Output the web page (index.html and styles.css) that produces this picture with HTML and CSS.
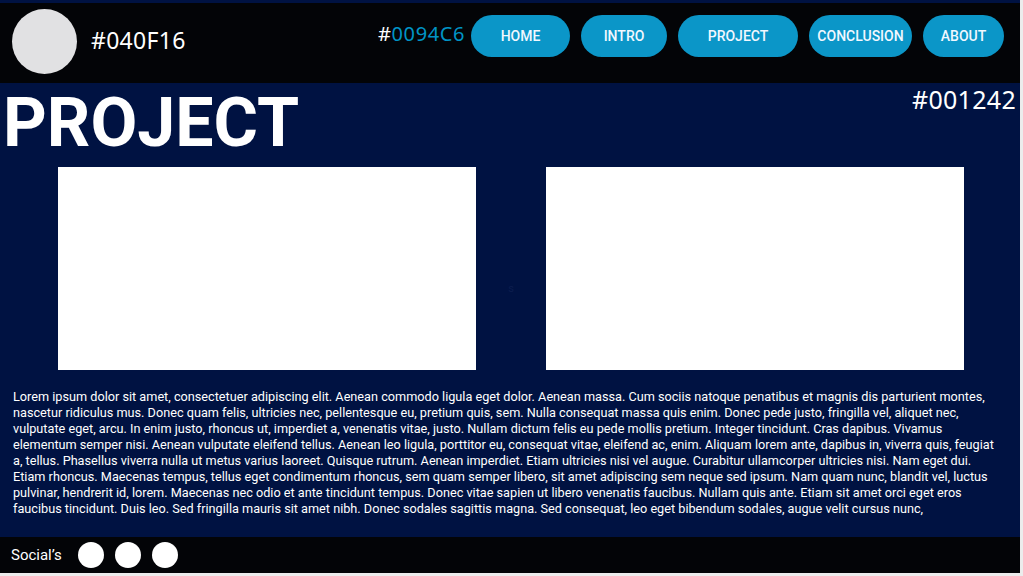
FILE: index.html
```html
<!DOCTYPE html>
<html lang="en">
<head>
<meta charset="utf-8">
<title>Project</title>
<link rel="stylesheet" href="styles.css">
</head>
<body>
<div class="page">
  <header class="header">
    <div class="logo"></div>
    <div class="brand-hex">#040F16</div>
    <div class="nav-hex"><span class="hash">#</span>0094C6</div>
    <nav class="nav">
      <a class="btn btn-home" href="#">HOME</a>
      <a class="btn btn-intro" href="#">INTRO</a>
      <a class="btn btn-project" href="#">PROJECT</a>
      <a class="btn btn-conclusion" href="#">CONCLUSION</a>
      <a class="btn btn-about" href="#">ABOUT</a>
    </nav>
  </header>
  <main class="main">
    <div class="title-row">
      <h1 class="title">PROJECT</h1>
      <div class="bg-hex">#001242</div>
    </div>
    <div class="media-row">
      <div class="media"></div>
      <span class="sep">s</span>
      <div class="media"></div>
    </div>
    <p class="text">Lorem ipsum dolor sit amet, consectetuer adipiscing elit. Aenean commodo ligula eget dolor. Aenean massa. Cum sociis natoque penatibus et magnis dis parturient montes,<br>
nascetur ridiculus mus. Donec quam felis, ultricies nec, pellentesque eu, pretium quis, sem. Nulla consequat massa quis enim. Donec pede justo, fringilla vel, aliquet nec,<br>
vulputate eget, arcu. In enim justo, rhoncus ut, imperdiet a, venenatis vitae, justo. Nullam dictum felis eu pede mollis pretium. Integer tincidunt. Cras dapibus. Vivamus<br>
elementum semper nisi. Aenean vulputate eleifend tellus. Aenean leo ligula, porttitor eu, consequat vitae, eleifend ac, enim. Aliquam lorem ante, dapibus in, viverra quis, feugiat<br>
a, tellus. Phasellus viverra nulla ut metus varius laoreet. Quisque rutrum. Aenean imperdiet. Etiam ultricies nisi vel augue. Curabitur ullamcorper ultricies nisi. Nam eget dui.<br>
Etiam rhoncus. Maecenas tempus, tellus eget condimentum rhoncus, sem quam semper libero, sit amet adipiscing sem neque sed ipsum. Nam quam nunc, blandit vel, luctus<br>
pulvinar, hendrerit id, lorem. Maecenas nec odio et ante tincidunt tempus. Donec vitae sapien ut libero venenatis faucibus. Nullam quis ante. Etiam sit amet orci eget eros<br>
faucibus tincidunt. Duis leo. Sed fringilla mauris sit amet nibh. Donec sodales sagittis magna. Sed consequat, leo eget bibendum sodales, augue velit cursus nunc,</p>
  </main>
  <footer class="footer">
    <span class="social-label">Social’s</span>
    <span class="dot"></span>
    <span class="dot"></span>
    <span class="dot"></span>
  </footer>
</div>
</body>
</html>
```

FILE: styles.css
```css
* { box-sizing: border-box; }
html, body { margin: 0; padding: 0; }
body {
  background: #ececec;
  font-family: Roboto, "Liberation Sans", sans-serif;
  width: 1023px;
  height: 576px;
  overflow: hidden;
}
.page {
  width: 1020px;
  height: 573px;
  background: #001242;
  padding-top: 3px;
  display: flex;
  flex-direction: column;
}
.header {
  height: 80px;
  background: #030407;
  display: flex;
  align-items: flex-start;
  padding: 0 16px 0 12px;
}
.logo {
  width: 65px;
  height: 65px;
  border-radius: 50%;
  background: #e1e1e3;
  margin-top: 6px;
}
.brand-hex {
  color: #fff;
  font-family: "Noto Sans", sans-serif;
  font-size: 23px;
  letter-spacing: 0.3px;
  line-height: 30px;
  margin-left: 14px;
  margin-top: 22px;
}
.nav-hex {
  margin-left: auto;
  color: #0094c6;
  font-family: "Noto Sans", sans-serif;
  font-size: 20px;
  letter-spacing: 0.6px;
  line-height: 24px;
  margin-top: 19px;
}
.nav-hex .hash { color: #fff; }
.nav {
  display: flex;
  gap: 11px;
  margin-left: 6px;
  margin-top: 12px;
}
.btn {
  height: 42px;
  border-radius: 21px;
  background: #0b96c8;
  color: #f2f8ff;
  text-decoration: none;
  font-size: 14px;
  font-weight: 500;
  display: flex;
  align-items: center;
  justify-content: center;
}
.btn-home { width: 99px; }
.btn-intro { width: 86px; }
.btn-project { width: 120px; }
.btn-conclusion { width: 103px; }
.btn-about { width: 81px; }
.main {
  flex: 1;
  display: flex;
  flex-direction: column;
}
.title-row {
  display: flex;
  justify-content: space-between;
  align-items: flex-start;
  padding: 0 4px 0 3px;
  margin-top: 6px;
}
.title {
  margin: 0;
  color: #fff;
  font-family: Roboto, sans-serif;
  font-weight: 700;
  font-size: 68px;
  line-height: 68px;
}
.bg-hex {
  color: #fff;
  font-family: "Noto Sans", sans-serif;
  font-size: 25px;
  letter-spacing: 0.3px;
  line-height: 28px;
  margin-top: -4px;
}
.media-row {
  display: flex;
  align-items: center;
  justify-content: space-between;
  padding: 0 56px 0 58px;
  margin-top: 10px;
}
.media {
  width: 418px;
  height: 203px;
  background: #fff;
}
.sep {
  color: #0c1d4e;
  font-size: 11px;
  margin-top: 40px;
}
.text {
  margin: 19px 0 0 0;
  padding: 0 4px 0 13px;
  color: #fff;
  font-size: 12.7px;
  line-height: 16px;
}
.footer {
  height: 36px;
  background: #030407;
  display: flex;
  align-items: center;
  padding-left: 11px;
  flex-shrink: 0;
}
.social-label {
  color: #fff;
  font-size: 15px;
  margin-right: 16px;
}
.dot {
  width: 26px;
  height: 26px;
  border-radius: 50%;
  background: #fff;
  margin-right: 11px;
}
```
